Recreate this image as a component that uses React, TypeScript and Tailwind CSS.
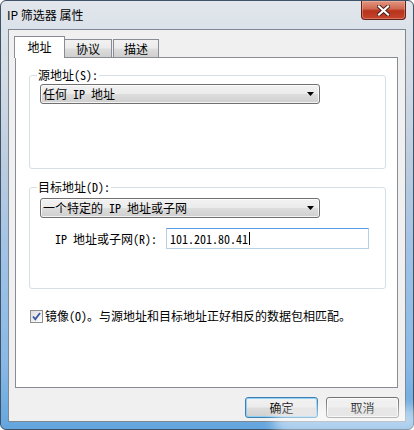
import type { ReactNode } from 'react'

// SimSun-like metrics: half-width latin, full-width CJK
const dlgFont = "font-['Noto_Sans_Mono_CJK_SC','Noto_Sans_CJK_SC',monospace] text-[12px] leading-[14px] text-black"

function DropArrow() {
  return (
    <svg width="7" height="4" viewBox="0 0 7 4" className="shrink-0">
      <polygon points="0,0 7,0 3.5,4" fill="#000" />
    </svg>
  )
}

function Combo({ value, width }: { value: string; width: string }) {
  return (
    <div
      className={`${width} flex h-[20px] items-center justify-between rounded-[3px] border border-[#707070] bg-[linear-gradient(180deg,#f2f2f2_0%,#ebebeb_48%,#dddddd_52%,#cfcfcf_100%)] pl-[2px] pr-[5px] shadow-[inset_0_0_0_1px_rgba(255,255,255,0.75)]`}
    >
      <span className="whitespace-pre">{value}</span>
      <DropArrow />
    </div>
  )
}

function Group({ legend, height, children }: { legend: string; height: string; children: ReactNode }) {
  return (
    <div className={`relative ${height} rounded-[3px] border border-[#d5dfe5] px-[10px]`}>
      <span className="absolute left-[7px] top-[-8px] bg-white px-[1px] whitespace-pre">{legend}</span>
      {children}
    </div>
  )
}

function Button({ label, focused }: { label: string; focused?: boolean }) {
  return (
    <div
      className={`flex h-[21px] w-[73px] items-center justify-center rounded-[3px] border bg-[linear-gradient(180deg,#f2f2f2_0%,#ebebeb_48%,#dddddd_52%,#cfcfcf_100%)] ${
        focused
          ? 'border-[#3c7fb1] shadow-[inset_0_0_0_1px_#8fd0f5]'
          : 'border-[#707070] shadow-[inset_0_0_0_1px_rgba(255,255,255,0.75)]'
      }`}
    >
      {label}
    </div>
  )
}

function CloseButton() {
  return (
    <div className="flex h-[19px] w-[45px] items-center justify-center self-start rounded-b-[4px] border border-t-0 border-[#5e2219] bg-[linear-gradient(180deg,#e39580_0%,#d06a52_42%,#b8321c_55%,#c4452b_100%)] shadow-[inset_0_0_0_1px_rgba(255,210,200,0.35)]">
      <svg width="13" height="11" viewBox="0 0 13 11">
        <path d="M2 1.5 L11 9.5 M11 1.5 L2 9.5" stroke="#4a1d17" strokeWidth="4" strokeLinecap="square" />
        <path d="M2 1.5 L11 9.5 M11 1.5 L2 9.5" stroke="#fff" strokeWidth="2.2" strokeLinecap="square" />
      </svg>
    </div>
  )
}

function Checkbox() {
  return (
    <div className="flex h-[13px] w-[13px] items-center justify-center border border-[#8e8f8f] bg-[linear-gradient(135deg,#dcdcdc_0%,#f4f4f4_70%,#ffffff_100%)]">
      <svg width="9" height="9" viewBox="0 0 9 9">
        <path d="M1 4.5 L3.3 7.2 L8 1" fill="none" stroke="#3b57a0" strokeWidth="1.8" />
      </svg>
    </div>
  )
}

export default function App() {
  return (
    <div className="h-[430px] w-[414px] overflow-hidden bg-white">
      <div className="relative flex h-full w-full flex-col rounded-[6px] border border-[#3f5268] bg-[linear-gradient(180deg,#e1e6ec_0%,#d3dbe4_18%,#b9cbdf_40%,#9fc2e6_60%,#88b9e6_85%,#64a5de_100%)]">
        {/* title bar */}
        <div className="flex h-[28px] shrink-0 items-center pl-[6px] pr-[7px]">
          <span className="font-['Noto_Sans_CJK_SC',sans-serif] text-[12px] leading-[14px] text-black">IP 筛选器 属性</span>
          <div className="ml-auto flex self-start">
            <CloseButton />
          </div>
        </div>

        {/* client area */}
        <div className={`mx-[7px] mb-[7px] flex flex-1 flex-col border border-[#7d8894] bg-[#f0f0f0] pt-[6px] ${dlgFont}`}>
          {/* tabs */}
          <div className="flex h-[21px] items-end pl-[5px]">
            <div className="relative z-10 -mb-px flex h-[22px] w-[51px] items-start justify-center border border-b-0 border-[#898c95] bg-white pt-[3px] font-['Noto_Sans_CJK_SC',sans-serif] text-[12px]">
              地址
            </div>
            <div className="flex h-[18px] w-[47px] items-center justify-center border border-b-0 border-l-0 border-[#898c95] bg-[linear-gradient(180deg,#f2f2f2_0%,#ebebeb_48%,#dddddd_52%,#cfcfcf_100%)] font-['Noto_Sans_CJK_SC',sans-serif] text-[12px]">
              协议
            </div>
            <div className="ml-px flex h-[18px] w-[46px] items-center justify-center border border-b-0 border-[#898c95] bg-[linear-gradient(180deg,#f2f2f2_0%,#ebebeb_48%,#dddddd_52%,#cfcfcf_100%)] font-['Noto_Sans_CJK_SC',sans-serif] text-[12px]">
              描述
            </div>
          </div>

          {/* tab page */}
          <div className="ml-[6px] h-[331px] w-[383px] border border-[#898c95] bg-white pl-[13px] pr-[11px] pt-[17px]">
            <Group legend="源地址(S):" height="h-[94px]">
              <div className="pt-[8px]">
                <Combo value="任何 IP 地址" width="w-[280px]" />
              </div>
            </Group>

            <div className="mt-[18px]">
              <Group legend="目标地址(D):" height="h-[102px]">
                <div className="pt-[10px]">
                  <Combo value="一个特定的 IP 地址或子网" width="w-[280px]" />
                </div>
                <div className="mt-[10px] flex items-center">
                  <span className="w-[126px] shrink-0 pl-[15px] whitespace-pre">IP 地址或子网(R):</span>
                  <div className="flex h-[21px] w-[203px] items-center border border-[#b5cfe7] border-t-[#569de5] pl-[3px]">
                    <span>101.201.80.41</span>
                    <span className="ml-px h-[13px] w-px bg-black" />
                  </div>
                </div>
              </Group>
            </div>

            <div className="mt-[20px] flex items-center gap-[2px] pl-px">
              <Checkbox />
              <span className="whitespace-pre">镜像(O)。与源地址和目标地址正好相反的数据包相匹配。</span>
            </div>
          </div>

          {/* dialog buttons */}
          <div className="mt-[9px] flex justify-end gap-[8px] pr-[6px]">
            <Button label="确定" focused />
            <Button label="取消" />
          </div>
        </div>

        {/* glass haze in the lower right corner */}
        <div className="pointer-events-none absolute bottom-[-6px] right-[-10px] h-[28px] w-[150px] rounded-full bg-white/50 blur-[6px]" />
      </div>
    </div>
  )
}
